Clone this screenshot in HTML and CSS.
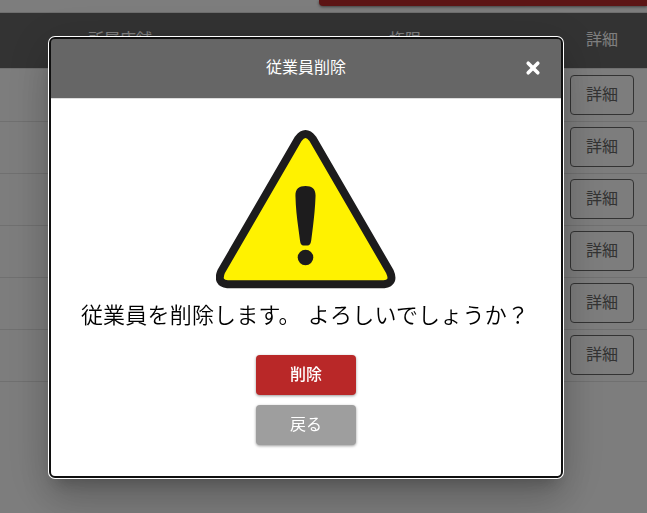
FILE: index.html
```html
<!DOCTYPE html>
<html lang="ja">
<head>
<meta charset="utf-8">
<title>従業員削除</title>
<link rel="stylesheet" href="styles.css">
</head>
<body>
<main class="page">
  <div class="toolbar"><div class="add-button"></div></div>
  <div class="row head"><span>所属店舗</span><span>権限</span><span>詳細</span></div>
  <div class="row"><button class="detail">詳細</button></div>
  <div class="row"><button class="detail">詳細</button></div>
  <div class="row"><button class="detail">詳細</button></div>
  <div class="row"><button class="detail">詳細</button></div>
  <div class="row"><button class="detail">詳細</button></div>
  <div class="row"><button class="detail">詳細</button></div>
</main>
<div class="overlay">
  <section class="dialog" role="dialog" aria-modal="true">
    <header class="dialog-header">
      <h1 class="title">従業員削除</h1>
      <svg class="close" viewBox="0 0 16 16"><path d="M3.2 3.2 12.8 12.8M12.8 3.2 3.2 12.8"/></svg>
    </header>
    <div class="dialog-body">
      <svg class="warning" viewBox="0 0 180 160">
        <path class="sign" d="M82.4 8.6Q89.5 -0.6 96.6 8.6L173.8 141.5Q179 153 168 154.2H11.5Q0.5 153 5.2 141.5Z"/>
        <path class="mark" d="M79.5 67C79 59 82.5 56 89.5 56S100 59 99.5 67C99 82 96.8 98 95.2 110.5Q94.5 115.5 91.5 115.5H87.5Q84.5 115.5 84 110.5C82.4 98 79.8 82 79.5 67Z"/>
        <circle class="mark" cx="89.5" cy="127.5" r="7.8"/>
      </svg>
      <p class="message">従業員を削除します。 よろしいでしょうか？</p>
      <button class="action danger">削除</button>
      <button class="action">戻る</button>
    </div>
  </section>
</div>
</body>
</html>
```

FILE: styles.css
```css
* { box-sizing: border-box; }
body {
  margin: 0;
  height: 513px;
  overflow: hidden;
  background: #fafafa;
  font-family: "Noto Sans CJK JP", sans-serif;
  font-size: 16px;
}
button { font: inherit; }
.toolbar {
  height: 13px;
  padding-left: 319px;
  border-bottom: 1px solid #ddd;
}
.add-button {
  height: 6px;
  background: #b92828;
  border-radius: 0 0 0 4px;
  box-shadow: 0 1px 3px rgba(0, 0, 0, .5);
}
.row {
  display: grid;
  grid-template-columns: 240px 330px 64px;
  align-items: center;
  justify-items: center;
  height: 52px;
  padding-bottom: 1px;
  border-bottom: 1px solid #e0e0e0;
}
.head {
  height: 56px;
  padding-bottom: 6px;
  background: #666;
  color: #fff;
  margin-bottom: 1px;
}
.detail {
  grid-column: 3;
  width: 64px;
  height: 40px;
  padding: 0 0 4px;
  border: 1px solid #666;
  border-radius: 4px;
  background: transparent;
  color: #666;
}
.overlay {
  position: fixed;
  inset: 0;
  padding: 39px 86px 37px 51px;
  background: rgba(0, 0, 0, .5);
}
.dialog {
  height: 437px;
  background: #fff;
  border-radius: 4px;
  outline: 2px solid #101010;
  box-shadow: 0 0 0 3px #fff, 0 11px 15px -4px rgba(0, 0, 0, .2),
    0 24px 38px 3px rgba(0, 0, 0, .14), 0 9px 46px 8px rgba(0, 0, 0, .12);
}
.dialog-header {
  display: grid;
  grid-template-columns: 60px 1fr 60px;
  align-items: center;
  height: 60px;
  padding-bottom: 5px;
  border-bottom: 1px solid #ddd;
  background: #666;
  color: #fff;
  border-radius: 3px 3px 0 0;
}
.title {
  grid-column: 2;
  margin: 0;
  font-size: 16px;
  font-weight: 400;
  line-height: 24px;
  text-align: center;
}
.close {
  width: 16px;
  height: 16px;
  margin: 3px 0 0 24px;
  fill: none;
  stroke: #fff;
  stroke-width: 3.6;
  stroke-linecap: round;
}
.dialog-body {
  display: flex;
  flex-direction: column;
  align-items: center;
  padding-top: 31px;
}
.warning { width: 180px; height: 160px; }
.sign {
  fill: #fff200;
  stroke: #1d1c1d;
  stroke-width: 8;
  stroke-linejoin: round;
}
.mark { fill: #1d1c1d; }
.message {
  margin: 7px 0 25px;
  color: #000;
  font-size: 22px;
  font-weight: 350;
  letter-spacing: .2px;
  word-spacing: 2px;
  line-height: 33px;
  white-space: nowrap;
  transform: translateX(-1px);
}
.action {
  width: 100px;
  height: 40px;
  margin-bottom: 10px;
  padding: 0 0 5px;
  border: 0;
  border-radius: 4px;
  background: #9e9e9e;
  color: #fff;
  box-shadow: 0 1px 3px rgba(0, 0, 0, .4);
}
.danger { background: #b92828; font-weight: 500; }
```
